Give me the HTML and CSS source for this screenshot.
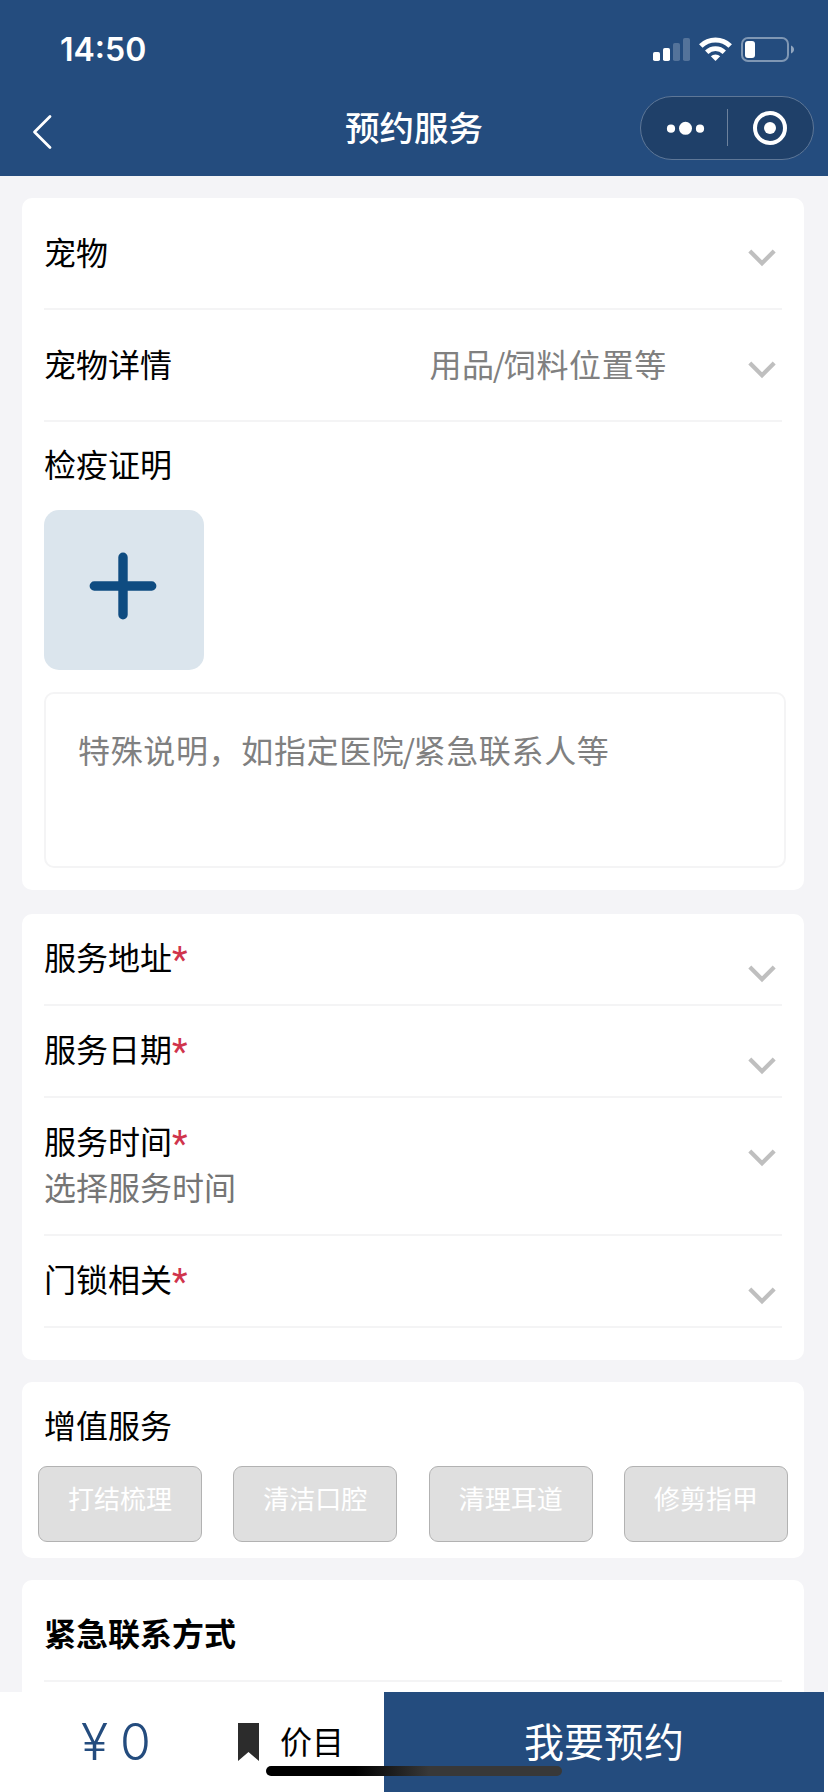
FILE: index.html
```html
<!DOCTYPE html>
<html lang="zh-CN">
<head>
<meta charset="utf-8">
<title>预约服务</title>
<link rel="stylesheet" href="styles.css">
</head>
<body>
<svg width="0" height="0" class="defs"><symbol id="chev" viewBox="0 0 28 18"><path d="M1.800 2 14 14.200 26.200 2" fill="none" stroke="#bfbfbf" stroke-width="4.200"/></symbol></svg>
<div class="screen">
  <header class="header">
    <div class="status">
      <span class="time">14:50</span>
      <svg class="status-icons" width="144" height="28" viewBox="652 36 144 28" fill="#fff">
        <rect x="653" y="52" width="7" height="9" rx="1.800"/><rect x="663" y="48" width="7" height="13" rx="1.800"/>
        <rect x="673" y="43" width="7" height="18" rx="1.800" opacity=".22"/><rect x="683" y="38" width="7" height="23" rx="1.800" opacity=".22"/>
        <path d="M715.500 61 L710.800 56.300 A6.800 6.800 0 0 1 720.200 56.300 Z"/>
        <path d="M706.700 52.200 A12.600 12.600 0 0 1 724.300 52.200" fill="none" stroke="#fff" stroke-width="4.800"/>
        <path d="M700.800 46 A21 21 0 0 1 730.200 46" fill="none" stroke="#fff" stroke-width="5"/>
        <rect x="742" y="38" width="46" height="23" rx="6" fill="none" stroke="#fff" stroke-width="2" opacity=".42"/>
        <rect x="745" y="41" width="10" height="17" rx="3"/>
        <path d="M791 45.500 C795 47 795 52 791 53.500 Z" opacity=".5"/>
      </svg>
    </div>
    <div class="nav">
      <svg class="back" width="20" height="36" viewBox="0 0 20 36"><path d="M18 2.500 2.500 18 18 33.500" fill="none" stroke="#fff" stroke-width="2.800" stroke-linecap="round" stroke-linejoin="round"/></svg>
      <h1 class="title">预约服务</h1>
      <div class="capsule">
        <svg width="172" height="62" viewBox="641 97 172 62" fill="#fff">
          <circle cx="671" cy="128.700" r="4.100"/><circle cx="685.500" cy="128.300" r="6.500"/><circle cx="700" cy="128.700" r="4.100"/>
          <rect x="727" y="109" width="1" height="37" opacity=".35"/>
          <circle cx="770" cy="128" r="15" fill="none" stroke="#fff" stroke-width="4"/><circle cx="770" cy="128" r="6"/>
        </svg>
      </div>
    </div>
  </header>

  <main class="content">
    <section class="card pet">
      <div class="row tall"><span class="label">宠物</span><svg class="chev"><use href="#chev"/></svg></div>
      <div class="row tall"><span class="label">宠物详情</span><span class="hint">用品<span class="slash">/</span>饲料位置等</span><svg class="chev"><use href="#chev"/></svg></div>
      <div class="proof">检疫证明</div>
      <div class="upload"><svg width="68" height="68" viewBox="0 0 68 68"><path d="M34 5.300V62.700M5.300 34H62.700" stroke="#0f4c81" stroke-width="9.400" stroke-linecap="round"/></svg></div>
      <div class="note">特殊说明，如指定医院<span class="slash">/</span>紧急联系人等</div>
    </section>

    <section class="card service">
      <div class="row"><div class="label">服务地址<i>*</i></div><svg class="chev"><use href="#chev"/></svg></div>
      <div class="row"><div class="label">服务日期<i>*</i></div><svg class="chev"><use href="#chev"/></svg></div>
      <div class="row"><div class="label">服务时间<i>*</i><div class="sub">选择服务时间</div></div><svg class="chev"><use href="#chev"/></svg></div>
      <div class="row"><div class="label">门锁相关<i>*</i></div><svg class="chev"><use href="#chev"/></svg></div>
    </section>

    <section class="card extras">
      <div class="extras-title">增值服务</div>
      <div class="options">
        <div class="option">打结梳理</div><div class="option">清洁口腔</div><div class="option">清理耳道</div><div class="option">修剪指甲</div>
      </div>
    </section>

    <section class="card contact"><div class="contact-title">紧急联系方式</div></section>
  </main>

  <footer class="footer">
    <div class="price"><span>¥</span><span>0</span></div>
    <div class="pricelist">
      <svg width="21" height="38" viewBox="0 0 21 38"><path d="M0 0H21V38L10.500 29 0 38Z" fill="#2c2c2c"/></svg>
      <span>价目</span>
    </div>
    <div class="book">我要预约</div>
  </footer>
  <div class="home-bar"></div>
</div>
</body>
</html>
```
FILE: styles.css
```css
* { box-sizing: border-box; }
body { margin: 0; background: #f4f4f7; font-family: "Noto Sans CJK SC", sans-serif; color: #000; }
.defs { position: absolute; }
.screen { position: relative; width: 828px; height: 1792px; overflow: hidden; display: flex; flex-direction: column; }

.header { height: 176px; background: #244c7e; color: #fff; flex: none; }
.status { height: 96px; padding: 36px 32px 0 60px; display: flex; justify-content: space-between; align-items: flex-start; }
.time { font: 600 32px/28px Inter, sans-serif; }
.status-icons { display: block; }
.nav { height: 64px; padding: 0 14px 0 32px; display: grid; grid-template-columns: 156px 1fr 174px; align-items: center; }
.back { margin-top: 7px; }
.title { margin: -4px 0 0; font-size: 34.500px; font-weight: 500; line-height: 60px; text-align: center; }
.capsule { width: 174px; height: 64px; border: 1px solid #5e7797; border-radius: 32px; background: #1f4069; display: flex; }

.content { flex: 1; min-height: 0; overflow: hidden; padding: 22px 24px 0 22px; }
.card { background: #fff; border-radius: 10px; padding: 0 22px; font-size: 32px; line-height: 46px; }
.row { display: flex; justify-content: space-between; padding: 19px 0 25px; border-bottom: 2px solid #f4f4f5; }
.chev { width: 28px; height: 18px; margin: 32px 6px -10px 0; flex: none; }
.row i { font: 400 36px/0 Roboto, sans-serif; vertical-align: -2px; color: #d0344c; }
.sub { color: #757575; }
.row.tall { height: 112px; padding-top: 30px; }
.tall .chev { margin-top: 21px; }
.tall .hint { margin-left: auto; margin-right: 81px; }
.hint, .note { color: #808080; letter-spacing: .65px; }
.slash { letter-spacing: -1.500px; margin-left: -2px; }

.pet { height: 692px; }
.proof { height: 88px; padding-top: 18px; }
.upload { width: 160px; height: 160px; border-radius: 15px; background: #dbe5ed; padding: 42px 0 0 45px; }
.upload svg { display: block; }
.note { width: 742px; height: 176px; margin-top: 22px; border: 2px solid #f4f4f5; border-radius: 10px; padding: 32px; }
.service { height: 446px; margin-top: 24px; }
.extras { height: 176px; margin-top: 22px; padding: 0 16px; }
.extras-title { height: 84px; padding: 19px 6px 0; }
.options { display: flex; justify-content: space-between; }
.option { width: 164px; height: 76px; border: 1px solid #b2b2b2; border-radius: 9px; background: #dfdfdf; color: #fff; font-size: 26px; line-height: 62px; text-align: center; }
.contact { height: 140px; margin-top: 22px; }
.contact-title { height: 102px; border-bottom: 2px solid #f4f4f5; padding-top: 29px; font-weight: 700; }

.footer { flex: none; height: 100px; background: #fff; padding-right: 4px; display: grid; grid-template-columns: 238px 146px 440px; }
.price { padding-left: 81px; color: #244c7e; font: 350 50px/101px Inter, sans-serif; display: flex; gap: 12px; }
.pricelist { display: flex; align-items: flex-start; gap: 21px; font-size: 32px; line-height: 96px; }
.pricelist svg { margin-top: 31px; }
.book { background: #244c7e; color: #fff; text-align: center; font-size: 40px; line-height: 96px; }
.home-bar { position: absolute; left: 266px; top: 1766px; width: 296px; height: 10px; border-radius: 5px; background: linear-gradient(90deg, #000 30%, #383838 55%); }
```
